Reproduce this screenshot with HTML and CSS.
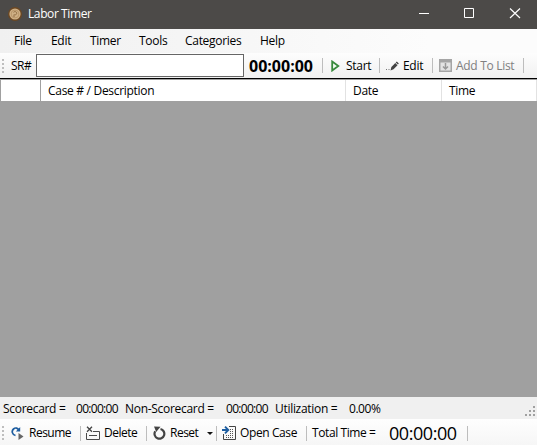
FILE: index.html
```
<!DOCTYPE html>
<html lang="en">
<head>
<meta charset="utf-8">
<title>Labor Timer</title>
<link rel="stylesheet" href="styles.css">
</head>
<body>
<div class="window">
  <header class="titlebar">
    <svg class="app-icon" width="14" height="14" viewBox="0 0 14 14"><circle cx="7" cy="7" r="7" fill="#6c4823"/><circle cx="7" cy="7" r="5.600" fill="#cfb086"/><circle cx="7" cy="7" r="3.9" fill="none" stroke="#a98558" stroke-width=".6"/><path d="M6 10V7.500M5.500 5.300C6.500 4 9 4.600 8.700 6.500C8.500 7.800 7.300 8 6.500 7.600" fill="none" stroke="#8a673c" stroke-width=".9"/></svg>
    <span class="title">Labor Timer</span>
    <svg class="controls" width="103" height="14" viewBox="0 0 103 14" fill="none" stroke="#fff"><path d="M0 6.500H10M45.500 1.500H54.500V10.500H45.500Z"/><path d="M91 1.500L101 11M101 1.500L91 11" stroke-width="1.200"/></svg>
  </header>
  <nav class="menu"><span>File</span><span>Edit</span><span>Timer</span><span>Tools</span><span>Categories</span><span>Help</span></nav>
  <div class="toolbar top">
    <i class="grip"></i>
    <label class="sr" for="sr">SR#</label>
    <input id="sr" class="sr-input">
    <b class="clock">00:00:00</b>
    <i class="sep"></i>
    <span class="tool start"><svg width="9" height="12" viewBox="0 0 9 12"><path d="M1.200 1.500V10.500L7.300 6Z" fill="#f5fff5" stroke="#388a3c" stroke-width="1.800"/></svg><span>Start</span></span>
    <i class="sep"></i>
    <span class="tool edit"><svg width="14" height="14" viewBox="0 0 14 14"><path d="M0 10.500H1M2.500 10.500H3.500" stroke="#777"/><path d="M4.500 11.500L5.400 8L9.300 4L11.500 6.200L7.500 10.300Z" fill="#424242"/><path d="M9.700 3.600L10.800 2.500L12.800 4.400L11.900 5.600Z" fill="#424242"/></svg><span>Edit</span></span>
    <i class="sep"></i>
    <span class="tool add"><svg width="13" height="13" viewBox="0 0 13 13"><path d="M0 0H13V13H0Z" fill="#a5a5a5"/><path d="M1.500 3.500H11.500V11.500H1.500Z" fill="#e4e4e4"/><path d="M6.500 4V10M4 7.500L6.500 10L9 7.500" stroke="#999" stroke-width="1.500" fill="none"/></svg><span>Add To List</span></span>
    <i class="sep"></i>
  </div>
  <main class="list">
    <div class="columns"><span></span><span>Case # / Description</span><span>Date</span><span>Time</span></div>
  </main>
  <div class="status">
    <span class="s1">Scorecard =</span><span class="s2">00:00:00</span><span class="s3">Non-Scorecard =</span><span class="s2">00:00:00</span><span class="s5">Utilization =</span><span class="s6">0.00%</span>
    <svg class="resize" width="10" height="10" viewBox="0 0 10 10" fill="#a0a0a0"><path d="M8 0h2v2h-2zM4 4h2v2h-2zM8 4h2v2h-2zM0 8h2v2h-2zM4 8h2v2h-2zM8 8h2v2h-2z"/></svg>
  </div>
  <div class="toolbar bottom">
    <i class="grip"></i>
    <span class="tool resume"><svg width="13" height="14" viewBox="0 0 13 14"><path d="M4.500 9.500C1 8.500 .3 5 2.500 3C4.500 1.200 7 2 8 4.500" fill="none" stroke="#1d5da0" stroke-width="1.700"/><path d="M9.200 1V5.500H4.800Z" fill="#1d5da0"/><path d="M7.500 7V14L12.500 10.500Z" fill="#666"/></svg><span>Resume</span></span>
    <i class="sep"></i>
    <span class="tool delete"><svg width="14" height="14" viewBox="0 0 14 14"><path d="M1 .8L6 5.800M6 .8L1 5.800" stroke="#444" stroke-width="1.300"/><path d="M.5 7V13.500H13.500V5.500H7M3 9.500H11" fill="none" stroke="#4a4a4a"/></svg><span>Delete</span></span>
    <i class="sep"></i>
    <span class="tool reset"><svg width="13" height="14" viewBox="0 0 13 14"><path d="M2.200 5.300A4.900 4.900 0 1 0 7.500 3" fill="none" stroke="#444" stroke-width="2.200"/><path d="M1 .5L7.500 .8L3.200 6Z" fill="#444"/></svg><span>Reset</span><i class="arrow"></i></span>
    <i class="sep"></i>
    <span class="tool open"><svg width="14" height="14" viewBox="0 0 14 14"><path d="M7 .5H13.500V13.500H1.500V8" fill="none" stroke="#444"/><path d="M4 11.500H12M4 9.500H12M8 7.500H12M8 5.500H12M8 3.500H12" stroke="#555" stroke-dasharray="1 1"/><path d="M0 4H5M3 .7L6.300 4L3 7.300" fill="none" stroke="#1d5da0" stroke-width="1.900"/></svg><span>Open Case</span></span>
    <i class="sep"></i>
    <span class="total-label">Total Time =</span>
    <span class="total">00:00:00</span>
    <i class="sep"></i>
  </div>
</div>
</body>
</html>
```
FILE: styles.css
```
* { box-sizing: border-box; }
body { margin: 0; }
.window {
  width: 537px; height: 445px; overflow: hidden;
  display: grid; grid-template-rows: 29px 24px 25px 319px 22px 26px;
  font: 12px/16px "Open Sans", "Noto Sans", sans-serif;
  letter-spacing: -0.3px; color: #000; white-space: nowrap; background: #f0f0f0;
}
svg { flex: none; display: block; }
.titlebar { display: flex; align-items: center; background: #4c4a48; color: #fff; padding: 0 15px 1px 8px; }
.title { margin-left: 6px; letter-spacing: -0.4px; }
.controls { margin-left: auto; }
.menu { display: grid; grid-template-columns: 37px 39px 49px 46px 75px 1fr; align-items: center; padding-left: 14px; background: linear-gradient(90deg, #f0f0f0, #fcfcfc 80%); }
.toolbar { display: flex; align-items: center; background: linear-gradient(#fdfdfd, #f1f1f1); }
.grip { width: 2px; height: 14px; margin-left: 2px; flex: none; background: repeating-linear-gradient(#bebebe 0 2px, transparent 2px 4px); }
.sr { width: 25px; margin-left: 7px; letter-spacing: -0.5px; }
.sr-input { width: 208px; height: 23px; border: 1px solid #666; background: #fff; padding: 2px 4px; }
.clock { width: 73px; margin-left: 5px; font-size: 16px; line-height: 20px; letter-spacing: 0; }
.sep { width: 1px; height: 15px; flex: none; background: #bdbdbd; }
.tool { display: flex; align-items: center; flex: none; }
.start { width: 56px; padding-left: 8px; gap: 6px; }
.edit { width: 52px; padding-left: 6px; gap: 3px; }
.add { width: 90px; padding-left: 6px; gap: 4px; color: #808080; letter-spacing: -0.3px; }
.list { background: #a0a0a0; border-top: 1px solid #000; padding-top: 1px; }
.columns { display: grid; grid-template-columns: 40px 305px 96px 1fr; height: 21px; border-left: 1px solid #a0a0a0; background: #fff; line-height: 21px; }
.columns span { padding-left: 7px; border-right: 1px solid #e2e2e2; }
.columns span:first-child { border-color: #a0a0a0; }
.status { display: flex; align-items: center; padding: 2px 2px 0 3px; }
.s1 { width: 73px; }
.s2 { width: 49px; letter-spacing: -0.7px; }
.s3 { width: 101px; }
.s5 { width: 74px; }
.s6 { letter-spacing: -0.45px; }
.resize { margin-left: auto; align-self: end; margin-bottom: 3px; }
.bottom { padding-top: 2px; background: linear-gradient(#fefefe, #f6f6f6); }
.resume { width: 76px; padding-left: 7px; gap: 5px; letter-spacing: -0.5px; }
.delete { width: 65px; padding-left: 5px; gap: 4px; letter-spacing: -0.5px; }
.reset { width: 69px; padding-left: 6px; gap: 4px; letter-spacing: -0.5px; }
.arrow { border: 3px solid transparent; border-top: 3px solid #111; border-bottom: 0; margin-left: 5px; }
.open { width: 89px; padding-left: 5px; gap: 4px; letter-spacing: -0.4px; }
.total-label { width: 77px; margin-left: 5px; letter-spacing: -0.4px; }
.total { width: 78px; font-size: 18px; line-height: 22px; letter-spacing: -0.45px; }
```
